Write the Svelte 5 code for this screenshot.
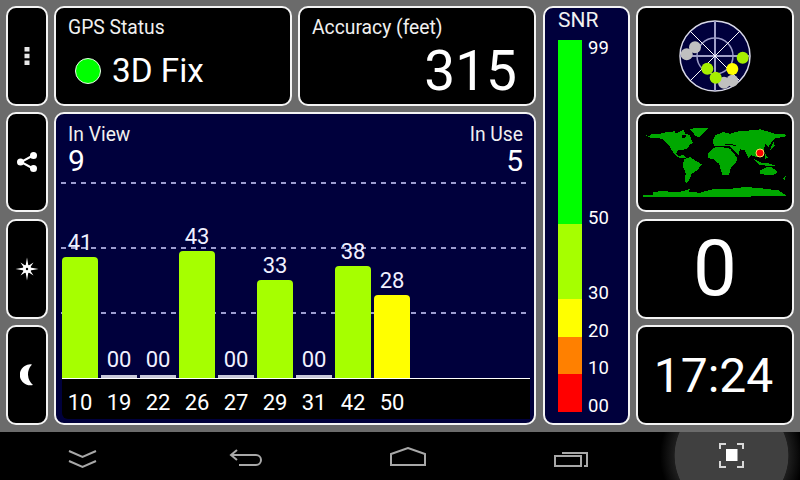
<script>
  const sats = [
    { id: "10", snr: "41", h: 121, color: "#a6ff00" },
    { id: "19", snr: "00", h: 3, color: "#c8c8d8" },
    { id: "22", snr: "00", h: 3, color: "#c8c8d8" },
    { id: "26", snr: "43", h: 127, color: "#a6ff00" },
    { id: "27", snr: "00", h: 3, color: "#c8c8d8" },
    { id: "29", snr: "33", h: 98, color: "#a6ff00" },
    { id: "31", snr: "00", h: 3, color: "#c8c8d8" },
    { id: "42", snr: "38", h: 112, color: "#a6ff00" },
    { id: "50", snr: "28", h: 83, color: "#ffff00" },
  ];

  const scale = [
    { h: 184, color: "#00ff00", labels: ["99", "50"] },
    { h: 75, color: "#a6ff00", labels: ["30"] },
    { h: 38, color: "#ffff00", labels: ["20"] },
    { h: 37, color: "#ff8000", labels: ["10"] },
    { h: 38, color: "#ff0000", labels: ["00"] },
  ];

  const skyDots = [
    { x: 8.7, y: 35.3, c: "#c0c0c0" },
    { x: 17, y: 28.3, c: "#c0c0c0" },
    { x: 46, y: 63.7, c: "#c0c0c0" },
    { x: 54.3, y: 61.7, c: "#c0c0c0" },
    { x: 29.3, y: 49.7, c: "#a6f000" },
    { x: 37.7, y: 58.7, c: "#a6f000" },
    { x: 64.7, y: 38.7, c: "#a6f000" },
    { x: 54.3, y: 50, c: "#ffff00" },
  ];

  // rough coastlines, traced in two halves
  const west = [
    "10,35 18,40 28,42 35,35 60,35 80,30 105,28 108,35 118,30 130,22 135,35 150,40 155,55 160,62 150,68 142,80 128,84 115,85 108,94 118,103 130,97 140,108 125,108 112,105 100,92 88,72 68,52 50,47 35,48 25,45",
    "148,22 165,18 205,18 195,30 178,45 165,42 158,30",
    "132,112 150,105 165,115 185,127 172,145 155,155 150,170 140,185 135,180 137,155 128,130",
    "10,218 38,218 40,210 70,207 100,210 130,208 150,200 145,210 180,212 225,200 225,225 10,225",
  ];
  const east = [
    "-20,95 -10,82 0,76 25,76 45,80 52,90 68,108 62,122 48,135 42,158 22,160 12,125 -5,112 -20,108",
    "-8,60 0,40 15,35 25,30 45,35 70,28 110,25 135,22 180,35 215,38 210,45 180,48 170,60 160,75 150,65 148,80 140,105 125,105 110,100 100,108 90,85 75,82 70,100 55,82 45,73 25,72 0,73",
    "135,145 155,135 170,135 188,150 175,160 150,158 135,155",
    "115,110 140,122 165,125 185,132 160,132 130,127",
    "150,95 160,108 150,110",
    "175,60 180,72 165,85 168,75",
    "205,170 212,162 208,175",
    "0,202 50,200 90,195 130,198 190,205 205,215 215,222 0,225",
  ];
  const seas = ["30,66 60,68 62,71 32,69"];
  const lakes = ["125,39 138,39 136,49 127,49"];
</script>

<div class="screen">
  <main class="grid">
    <button class="panel side" style="grid-area: 1 / 1" aria-label="Menu">
      <svg width="8" height="18" viewBox="0 0 8 18"><path fill="#e8e8e8" d="M1.500 0h5v4.500h-5zM1.500 6.750h5v4.500h-5zM1.500 13.500h5V18h-5z" /></svg>
    </button>
    <button class="panel side" style="grid-area: 2 / 1" aria-label="Share">
      <svg width="22" height="22" viewBox="0 0 22 22">
        <path d="M17 4.500 5 11l12 6.500" fill="none" stroke="#fff" stroke-width="2" />
        <circle cx="17.500" cy="4.500" r="3.500" fill="#fff" />
        <circle cx="4.500" cy="11" r="3.500" fill="#fff" />
        <circle cx="17.500" cy="17.500" r="3.500" fill="#fff" />
      </svg>
    </button>
    <button class="panel side" style="grid-area: 3 / 1" aria-label="Brightness">
      <svg width="24" height="24" viewBox="-1 -1 24 24">
        <polygon fill="#fff" points="11,-.5 12.400,7.800 17.500,4.500 14.200,9.600 22.500,11 14.200,12.400 17.500,17.500 12.400,14.200 11,22.500 9.600,14.200 4.500,17.500 7.800,12.400 -.5,11 7.800,9.600 4.500,4.500 9.600,7.800" />
        <circle cx="11" cy="11" r="4" fill="#fff" />
        <circle cx="11" cy="11" r="1.200" fill="#000" />
      </svg>
    </button>
    <button class="panel side" style="grid-area: 4 / 1" aria-label="Night mode">
      <svg width="14" height="22" viewBox="0 0 14 22"><path fill="#fff" d="M12 .5A10.500 10.500 0 1 0 13 21 14 14 0 0 1 12 .5z" /></svg>
    </button>

    <section class="panel status" style="grid-area: 1 / 2">
      <h2>GPS Status</h2>
      <div class="fix"><span class="led"></span>3D Fix</div>
    </section>

    <section class="panel accuracy" style="grid-area: 1 / 3">
      <h2>Accuracy (feet)</h2>
      <div class="big">315</div>
    </section>

    <section class="panel chart" style="grid-area: 2 / 2 / 5 / 4">
      <header class="chart-head">
        <div><h2>In View</h2><div class="count">9</div></div>
        <div class="right"><h2>In Use</h2><div class="count">5</div></div>
      </header>
      <div class="guide" style="top: 68px"></div>
      <div class="guide" style="top: 133px"></div>
      <div class="guide" style="top: 198px"></div>
      <div class="bars">
        {#each sats as s}
          <div class="col">
            <span class="val">{s.snr}</span>
            <div class="bar" class:empty={s.h < 5} style="height: {s.h}px; background: {s.color}"></div>
          </div>
        {/each}
      </div>
      <div class="ids">
        {#each sats as s}
          <span>{s.id}</span>
        {/each}
      </div>
    </section>

    <section class="panel snr" style="grid-area: 1 / 4 / 5 / 5">
      <h2>SNR</h2>
      <div class="scale">
        {#each scale as row}
          <div class="row" style="height: {row.h}px">
            <div class="swatch" style="background: {row.color}"></div>
            <div class="ticks" class:split={row.labels.length > 1}>
              {#each row.labels as l}<span>{l}</span>{/each}
            </div>
          </div>
        {/each}
      </div>
    </section>

    <section class="panel centered" style="grid-area: 1 / 5">
      <svg width="74" height="74" viewBox="0 0 74 74">
        <circle cx="37" cy="37" r="35" fill="#00003c" stroke="#d8d8e8" stroke-width="1.500" />
        <circle cx="37" cy="37" r="18" fill="none" stroke="#9c9cc8" stroke-width="1.500" />
        <path d="M37 2v70M2 37h70" stroke="#a0a0c8" stroke-width="2" />
        <path d="M12.300 12.300l49.400 49.400M61.700 12.300 12.300 61.700" stroke="#fff" stroke-width="1" />
        {#each skyDots as d}
          <circle cx={d.x} cy={d.y} r="6" fill={d.c} />
        {/each}
      </svg>
    </section>

    <section class="panel map" style="grid-area: 2 / 5">
      <svg width="150" height="95" viewBox="0 0 450 285" shape-rendering="crispEdges">
        <g transform="translate(0 21)">
          {#each west as pts}
            <polygon points={pts} fill="#00a800" />
          {/each}
          {#each lakes as pts}
            <polygon points={pts} fill="#000" />
          {/each}
        </g>
        <g transform="translate(225 21)">
          {#each east as pts}
            <polygon points={pts} fill="#00a800" />
          {/each}
          {#each seas as pts}
            <polygon points={pts} fill="#000" />
          {/each}
        </g>
        <circle cx="360" cy="114" r="12" fill="#ff0000" stroke="#ffe060" stroke-width="3" shape-rendering="auto" />
      </svg>
    </section>

    <section class="panel centered speed" style="grid-area: 3 / 5">0</section>
    <section class="panel centered clock" style="grid-area: 4 / 5">17:24</section>
  </main>

  <nav class="navbar">
    <div class="glow"></div>
    <svg class="nav-icon" style="left: 67px; top: 17px" width="31" height="20" viewBox="0 0 31 20">
      <path d="M2 2l13.500 6L29 2M2 12l13.500 6L29 12" fill="none" stroke="#a8a8a8" stroke-width="2" />
    </svg>
    <svg class="nav-icon" style="left: 229px; top: 16px" width="34" height="20" viewBox="0 0 34 20">
      <path d="M8 2 2 7l6 5M2 7h25a4.500 4.500 0 0 1 0 10H10" fill="none" stroke="#a8a8a8" stroke-width="2" />
    </svg>
    <svg class="nav-icon" style="left: 390px; top: 15px" width="36" height="20" viewBox="0 0 36 20">
      <path d="M1 18V7L18 1l17 6v11z" fill="none" stroke="#a8a8a8" stroke-width="2" />
    </svg>
    <svg class="nav-icon" style="left: 554px; top: 17px" width="34" height="18" viewBox="0 0 34 18">
      <path d="M1 7h26v10H1zM8 4h25M33 3v14h-3" fill="none" stroke="#a8a8a8" stroke-width="2" />
    </svg>
    <svg class="nav-icon" style="left: 719px; top: 11px" width="25" height="25" viewBox="0 0 25 25">
      <path d="M1 6V1h6M18 1h6v5M1 18v6h6M18 24h6v-6" fill="none" stroke="#d8d8d8" stroke-width="2" />
      <path fill="#fff" d="M7 6h11.500v12H7z" />
    </svg>
  </nav>
</div>

<style>
  :global(body) {
    background: #6b6b6b;
  }

  .screen {
    width: 800px;
    height: 480px;
    display: flex;
    flex-direction: column;
    overflow: hidden;
    font-family: Roboto, "Liberation Sans", sans-serif;
    color: #fff;
  }

  .grid {
    height: 432px;
    box-sizing: border-box;
    padding: 6px 6px 7px;
    display: grid;
    grid-template-columns: 42px 238px 238px 88px 158px;
    grid-template-rows: repeat(4, 1fr);
    gap: 6.500px 6px;
  }

  .panel {
    box-sizing: border-box;
    background: #000;
    border: 2px solid #f4f4f4;
    border-radius: 10px;
    position: relative;
    min-height: 0;
    min-width: 0;
    padding: 0;
    color: #fff;
  }

  h2 {
    margin: 0;
    font-size: 19.300px;
    font-weight: 400;
    line-height: 20px;
    color: #f0f0f0;
  }

  .side {
    display: flex;
    align-items: center;
    justify-content: center;
  }

  .status,
  .accuracy {
    padding: 10px 12px;
  }

  .fix {
    display: flex;
    align-items: center;
    gap: 11px;
    margin: 15px 0 0 7px;
    font-size: 33.300px;
    line-height: 36px;
  }

  .led {
    width: 26px;
    height: 26px;
    box-sizing: border-box;
    border-radius: 50%;
    background: #00ff00;
    border: 1.500px solid #e8ffe8;
  }

  .big {
    text-align: right;
    font-size: 55px;
    line-height: 56px;
    margin-top: 5px;
    padding-right: 5px;
  }

  .chart,
  .snr {
    background: #00003c;
  }

  .chart {
    padding: 11px 4px 4px 6px;
    display: flex;
    flex-direction: column;
  }

  .chart-head {
    display: flex;
    justify-content: space-between;
    padding: 0 7px 0 6px;
    height: 58px;
  }

  .right {
    text-align: right;
  }

  .count {
    font-size: 30px;
    line-height: 30px;
    margin-top: 1px;
  }

  .guide {
    position: absolute;
    left: 5px;
    right: 8px;
    height: 2px;
    background: repeating-linear-gradient(90deg, #9c9cd0 0 5px, transparent 5px 10px);
  }

  .bars {
    flex: 1;
    display: flex;
    align-items: flex-end;
    gap: 3px;
    position: relative;
    border-bottom: 1px solid #fff;
  }

  .col {
    width: 36px;
    display: flex;
    flex-direction: column;
    align-items: center;
  }

  .val {
    font-size: 22px;
    line-height: 24px;
    padding-bottom: 2px;
    color: #f0f0ff;
  }

  .bar {
    width: 100%;
    border-radius: 4px 4px 0 0;
  }

  .bar.empty {
    border-radius: 0;
    margin-top: 1px;
  }

  .ids {
    height: 40px;
    background: #000;
    display: flex;
    gap: 3px;
    align-items: center;
    border-radius: 0 0 0 6px;
  }

  .ids span {
    width: 36px;
    text-align: center;
    font-size: 22px;
    padding-top: 6px;
  }

  .snr {
    margin-left: 1px;
    padding: 0 0 0 13px;
  }

  .snr h2 {
    font-size: 21px;
    line-height: 26px;
    margin: -1px 0 7px 0;
  }

  .scale {
    display: flex;
    flex-direction: column;
  }

  .row {
    display: flex;
    gap: 6px;
  }

  .swatch {
    width: 24px;
  }

  .ticks {
    display: flex;
    flex-direction: column;
    justify-content: flex-end;
    font-size: 18.500px;
    line-height: 20px;
    margin-bottom: -4px;
  }

  .ticks.split {
    justify-content: space-between;
    margin-top: -2px;
  }

  .centered {
    display: flex;
    align-items: center;
    justify-content: center;
  }

  .map {
    display: flex;
    align-items: flex-start;
    justify-content: center;
    overflow: hidden;
    padding-top: 1px;
  }

  .speed {
    font-size: 78px;
  }

  .clock {
    font-size: 48px;
    padding-right: 3px;
  }

  .navbar {
    flex: 1;
    background: #000;
    position: relative;
    overflow: hidden;
  }

  .glow {
    position: absolute;
    left: 660px;
    top: -48px;
    width: 143px;
    height: 143px;
    border-radius: 50%;
    background: radial-gradient(circle closest-side, #404040 0 79%, #1e1e1e 80%, #000 100%);
  }

  .nav-icon {
    position: absolute;
  }
</style>
